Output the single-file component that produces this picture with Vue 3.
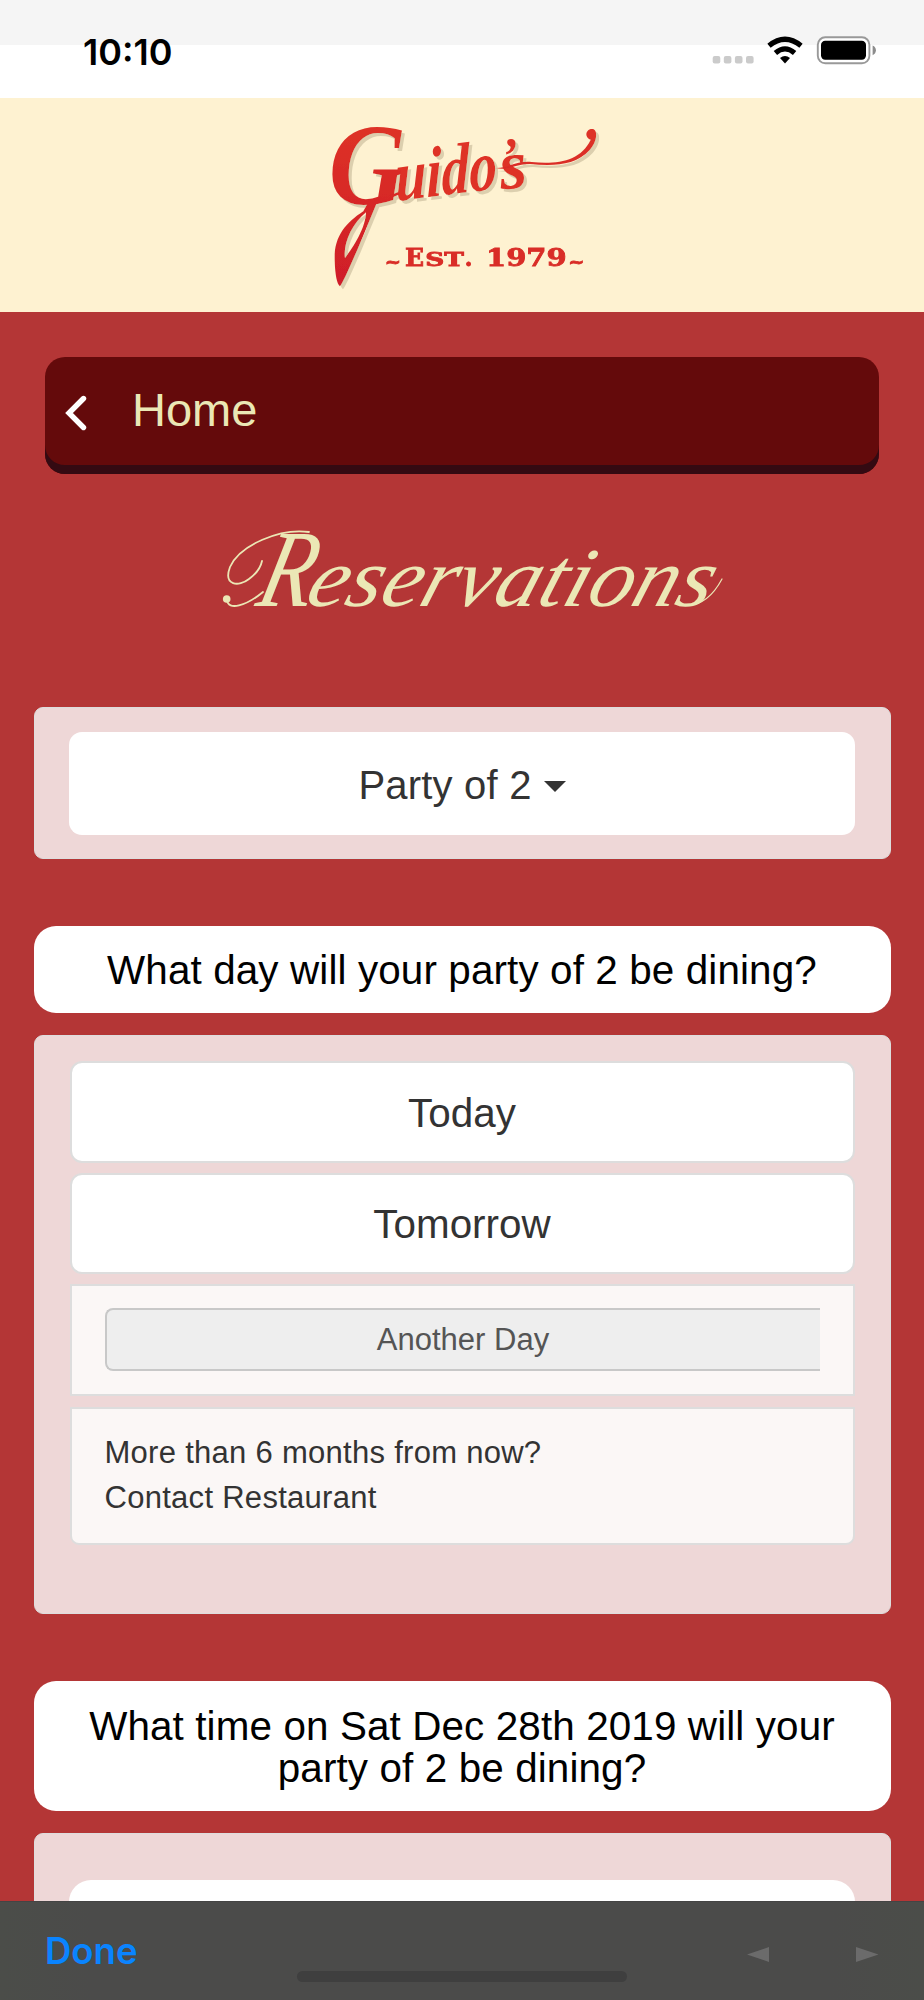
<script setup>
const days = ['Today', 'Tomorrow']
</script>

<template>
  <div class="screen">
    <header class="status">
      <span class="clock">10:10</span>
      <svg class="status-icons" width="168" height="32" viewBox="710 34 168 32">
        <g fill="#cbcbcb">
          <rect x="712.7" y="56" width="7.6" height="7.4" rx="2" />
          <rect x="723.8" y="56" width="7.6" height="7.4" rx="2" />
          <rect x="734.9" y="56" width="7.6" height="7.4" rx="2" />
          <rect x="746" y="56" width="7.6" height="7.4" rx="2" />
        </g>
        <g fill="none" stroke="#000" stroke-width="5.2">
          <path d="M769 45.8 Q785 32.8 801 45.8" />
          <path d="M775.4 53 Q785 44.8 794.6 53" />
        </g>
        <path d="M780 58 Q785 53.8 790 58 L785 63.4 Z" />
        <rect x="817.8" y="37.3" width="51.6" height="26" rx="7.5" fill="#fff" stroke="#999" stroke-width="1.9" />
        <rect x="821" y="40.8" width="45" height="19" rx="4.2" />
        <path d="M872.6 45.5 Q875.9 47 875.9 50.3 T872.6 55.3 Z" fill="#8c8c8c" />
      </svg>
    </header>

    <div class="brand">
      <svg class="logo" width="310" height="210" viewBox="0 0 930 630">
        <defs>
          <filter id="logoShadow" x="-10%" y="-10%" width="125%" height="125%">
            <feDropShadow dx="9" dy="9" stdDeviation="1.5" flood-color="#dccfae" flood-opacity="1" />
          </filter>
          <linearGradient id="logoRed" gradientUnits="userSpaceOnUse" x1="0" y1="70" x2="0" y2="560">
            <stop offset="0" stop-color="#de3226" />
            <stop offset="1" stop-color="#cf1d29" />
          </linearGradient>
        </defs>
        <g fill="url(#logoRed)" filter="url(#logoShadow)">
          <g class="script">
            <text x="56" y="313" font-size="350" textLength="232" lengthAdjust="spacingAndGlyphs">G</text>
            <text transform="translate(258 303) rotate(-7) skewX(-6)" font-size="215" textLength="306" lengthAdjust="spacingAndGlyphs">uido</text>
            <text transform="translate(572 215)" font-size="150">’</text>
            <text transform="translate(574 268) rotate(-5)" font-size="210">s</text>
          </g>
          <path fill-rule="evenodd" d="M160 334 C105 370 70 412 74 485 C76 525 80 550 90 559 C103 540 119 500 143 447 L204 300 L178 300 Z M168 337 C168 380 132 440 105 474 C99 432 125 372 168 337 Z" />
          <path d="M198 309 Q228 296 266 280" fill="none" stroke="url(#logoRed)" stroke-width="8" />
          <path d="M555 204 C600 205 612 182 665 186 C742 193 812 184 842 119 C820 110 829 84 849 87 C867 94 858 130 839 150 C796 199 724 198 660 192 C612 192 602 213 555 204 Z" />
        </g>
        <g class="est">
          <text x="224" y="504" font-size="58">~</text>
          <text x="285" y="498" font-size="75">E</text>
          <text x="346" y="498" font-size="57" textLength="116" lengthAdjust="spacingAndGlyphs">ST</text>
          <text x="464" y="498" font-size="66">.</text>
          <text x="528" y="498" font-size="75" textLength="242" lengthAdjust="spacingAndGlyphs">1979</text>
          <text x="775" y="504" font-size="58">~</text>
        </g>
      </svg>
    </div>

    <main>
      <a class="home">
        <svg width="22" height="36" viewBox="0 0 22 36">
          <path d="M18.5 3.5 L4 18 L18.5 32.5" fill="none" stroke="#fff" stroke-width="5.4" stroke-linecap="round" />
        </svg>
        <span>Home</span>
      </a>

      <svg class="title" width="550" height="150" viewBox="200 490 550 150">
        <g class="title-text">
          <text transform="translate(254 606) skewX(-14)" font-size="110" textLength="54" lengthAdjust="spacingAndGlyphs">R</text>
          <text transform="translate(303 606) skewX(-18)" font-size="84" textLength="404" lengthAdjust="spacingAndGlyphs">eservations</text>
        </g>
        <g fill="none" stroke="#ebe7b5" stroke-linecap="round">
          <path d="M309 532 C280 528 240 545 230 567 C223 586 239 587 249 579 Q260 571 262 561" stroke-width="1.8" />
          <path d="M227 600 C228 611 246 606 263 592" stroke-width="1.8" />
          <path d="M688 605 C704 605 715 592 722 579" stroke-width="1.2" />
        </g>
        <circle cx="226.7" cy="599" r="3.8" fill="#ebe7b5" />
      </svg>

      <section class="panel party">
        <button class="select">Party of 2<i class="caret"></i></button>
      </section>

      <h2 class="question">What day will your party of 2 be dining?</h2>

      <section class="panel days">
        <button v-for="day in days" :key="day" class="day">{{ day }}</button>
        <div class="cell"><div class="picker">Another Day</div></div>
        <div class="cell contact">More than 6 months from now?<br />Contact Restaurant</div>
      </section>

      <h2 class="question second">What time on Sat Dec 28th 2019 will your<br />party of 2 be dining?</h2>

      <section class="panel times"><div class="time-box"></div></section>
    </main>

    <footer class="toolbar">
      <span class="done">Done</span>
      <svg class="arrows" width="132" height="18" viewBox="747 1946 132 18">
        <path d="M769 1947 V1962 L747 1954.5 Z M856 1947 V1962 L878.5 1954.5 Z" fill="#6b6b6b" />
      </svg>
      <i class="indicator"></i>
    </footer>
  </div>
</template>

<style>
body { margin: 0; }
</style>

<style scoped>
* { box-sizing: border-box; }
.screen {
  width: 924px;
  height: 2000px;
  overflow: hidden;
  position: relative;
  background: #b43636;
  font-family: "Liberation Sans", Arial, sans-serif;
  color: #333;
}
.status {
  height: 98px;
  padding: 34px 46px 0 83px;
  display: flex;
  justify-content: space-between;
  align-items: flex-start;
  background: linear-gradient(#f5f5f5 45px, #fff 45px);
}
.clock {
  font: 600 36px/36px Inter, sans-serif;
  color: #000;
}
.brand {
  height: 214px;
  padding-top: 2px;
  background: #fef2d1;
}
.logo { display: block; margin-left: 310px; }
.script text { font-family: "Liberation Serif", serif; font-weight: bold; font-style: italic; }
.est text {
  font-family: "DejaVu Serif", serif;
  font-weight: bold;
  fill: #d92d27;
  stroke: #d92d27;
  stroke-width: 2.5px;
}
main { padding: 45px 34px 0; }
.home {
  height: 116.5px;
  margin: 0 11px;
  padding: 0 0 9px 20px;
  display: flex;
  align-items: center;
  gap: 45px;
  border-radius: 20px;
  background: #640a0b;
  box-shadow: inset 0 -9px 0 #340a12;
  color: #ebe7b5;
  font-size: 47px;
}
.home span { margin-top: -2px; }
.home svg { margin-top: 4px; }
.title { display: block; margin: 16.5px 0 0 166px; overflow: visible; }
.title-text text { font-family: "Liberation Serif", serif; font-style: italic; fill: #ebe7b5; }
.panel {
  margin-left: -0.5px;
  margin-right: -0.5px;
  border: 1px solid #ddd;
  border-radius: 9px;
  background: #eed7d7;
}
.party { height: 152px; margin-top: 67px; padding: 24px 34.5px; }
button { font: inherit; color: inherit; display: flex; align-items: center; justify-content: center; }
.select {
  width: 100%;
  height: 103px;
  padding: 3px 0 0;
  border: 0;
  border-radius: 13px;
  background: #fff;
  font-size: 40px;
  letter-spacing: 0.2px;
}
.caret {
  margin: 3px 0 0 12px;
  border: 11px solid transparent;
  border-top-color: #333;
  border-bottom: 0;
}
.question {
  height: 87px;
  margin: 67px -0.5px 22px;
  display: flex;
  align-items: center;
  justify-content: center;
  border-radius: 22px;
  background: #fff;
  color: #000;
  font-size: 40.4px;
  font-weight: 400;
  letter-spacing: 0.12px;
  line-height: 42px;
  text-align: center;
}
.days { height: 579px; padding: 25px 35px; display: flex; flex-direction: column; }
.day {
  height: 101.5px;
  margin-bottom: 10px;
  padding: 3px 0 0;
  border: 2px solid #ddd;
  border-radius: 12px;
  background: #fff;
  font-size: 40.4px;
  flex: none;
}
.cell {
  height: 112px;
  margin-bottom: 11px;
  padding: 22px 33px;
  border: 2px solid #ddd;
  background: #fbf7f6;
}
.picker {
  height: 63px;
  border: 2px solid #c8c8c8;
  border-right: 0;
  border-radius: 8px 0 0 8px;
  background: #eee;
  color: #555;
  font-size: 31px;
  line-height: 59px;
  text-align: center;
}
.contact {
  height: 138px;
  padding-top: 22px;
  border-radius: 0 0 9px 9px;
  font-size: 31px;
  letter-spacing: 0.28px;
  line-height: 44.7px;
}
.second { height: 130px; margin-top: 67px; padding-top: 2px; }
.times { height: 190px; padding: 46px 34.5px; }
.time-box { height: 120px; border-radius: 22px; background: #fff; }
.toolbar {
  position: absolute;
  inset: 1901px 0 0;
  padding: 27px 45px 0 45px;
  display: flex;
  justify-content: space-between;
  align-items: flex-start;
  border-top: 1px solid #444;
  background: linear-gradient(90deg, #4b4d49, #4b4b4a 10%, #4b4b4a 90%, #4b4d49);
}
.done { font: 600 36.5px/44px Inter, sans-serif; color: #0a84ff; }
.arrows { margin-top: 17px; }
.indicator {
  position: absolute;
  left: 297px;
  top: 69px;
  width: 330px;
  height: 11px;
  border-radius: 6px;
  background: #3f3f3f;
}
</style>
